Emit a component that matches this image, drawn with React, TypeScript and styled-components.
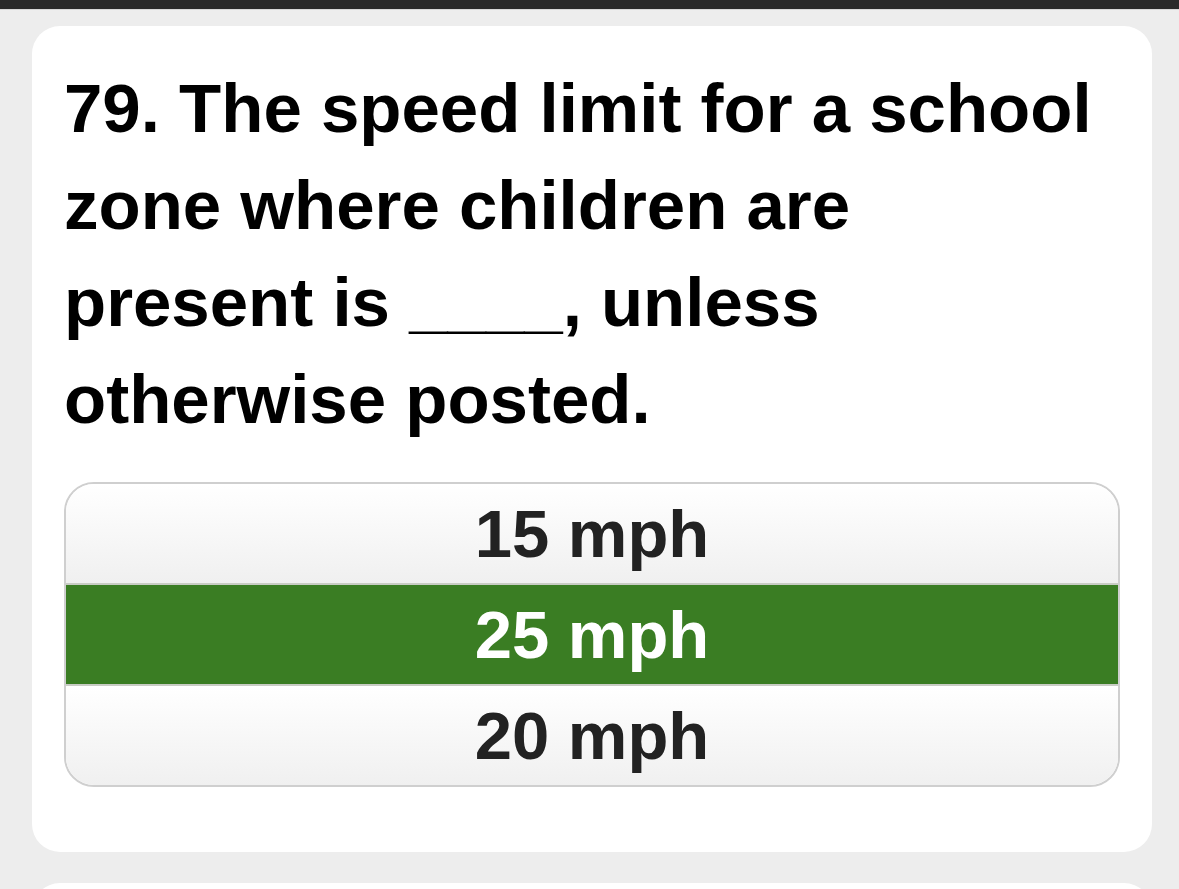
import React from 'react';
import styled, { createGlobalStyle } from 'styled-components';

const GlobalStyle = createGlobalStyle`
  html, body {
    margin: 0;
    padding: 0;
    background: #ededed;
    font-family: "Liberation Sans", Arial, sans-serif;
  }
`;

const answers = ['15 mph', '25 mph', '20 mph'];
const selected = 1;

const App: React.FC = () => {
  return (
    <>
      <GlobalStyle />
      <Page>
        <TopBar />
        <Content>
          <Card>
            <Question>
              79. The speed limit for a school zone where children are present is ____, unless
              otherwise posted.
            </Question>
            <Options>
              {answers.map((a, i) => (
                <Option key={a} $active={i === selected}>
                  {a}
                </Option>
              ))}
            </Options>
          </Card>
          <NextCard />
        </Content>
      </Page>
    </>
  );
};

const Page = styled.div`
  height: 889px;
  overflow: hidden;
  background: #ededed;
`;

const TopBar = styled.div`
  height: 9px;
  background: #2a2a2a;
  border-bottom: 1px solid #d8d8d8;
`;

const Content = styled.div`
  display: flex;
  flex-direction: column;
  gap: 31px;
  padding: 16px 27px 0 32px;
`;

const Card = styled.div`
  background: #fff;
  border-radius: 28px;
  padding: 34px 32px 65px 32px;
`;

const NextCard = styled.div`
  background: #fff;
  border-radius: 28px;
  height: 120px;
`;

const Question = styled.h1`
  margin: 0 0 34px;
  font-size: 69px;
  line-height: 97px;
  font-weight: 700;
  color: #000;
  padding-right: 20px;
`;

const Options = styled.div`
  border: 2px solid #cfcfcf;
  border-radius: 30px;
  overflow: hidden;
  display: flex;
  flex-direction: column;
`;

const Option = styled.div<{ $active: boolean }>`
  height: 99px;
  display: flex;
  align-items: center;
  justify-content: center;
  font-size: 67px;
  font-weight: 700;
  color: ${(p) => (p.$active ? '#fff' : '#222')};
  background: ${(p) => (p.$active ? '#3a7d23' : 'linear-gradient(#ffffff, #f0f0f0)')};
  & + & {
    border-top: 2px solid #c8ccc4;
  }
`;

export default App;
